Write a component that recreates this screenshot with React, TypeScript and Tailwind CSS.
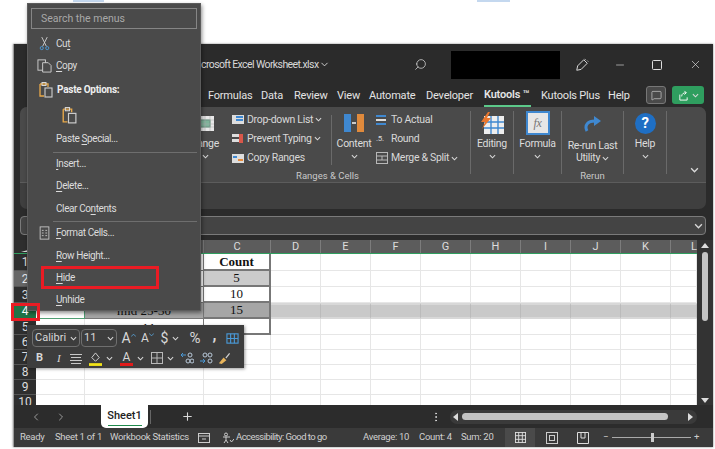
import React from "react";
import { Search, Minus, X, ChevronDown, ChevronLeft, ChevronRight, Plus, MoreVertical, MessageSquare } from "lucide-react";

const Chev = ({ c = "" }: { c?: string }) => (
  <svg viewBox="0 0 8 5" className={`w-[7px] h-[5px] shrink-0 ${c}`} fill="none" stroke="#d8d8d8" strokeWidth="1.2"><path d="M1 1l3 3 3-3" /></svg>
);

const U = ({ children }: { children: React.ReactNode }) => <span className="underline underline-offset-2">{children}</span>;

const MenuItem = ({ icon, children, h = "h-[22.5px]" }: { icon?: React.ReactNode; children: React.ReactNode; h?: string }) => (
  <div className={`flex items-center ${h} pl-[2px] text-[10px] tracking-[-0.4px] text-[#dcdcdc]`}>
    <div className="w-[23px] flex justify-center shrink-0">{icon}</div>
    <div>{children}</div>
  </div>
);

const Divider = () => <div className="h-[1px] bg-[#6e6e6e] ml-[22px]" />;

const PasteIcon = ({ s = 18 }: { s?: number }) => (
  <svg viewBox="0 0 18 18" width={s} height={s} fill="none">
    <path d="M4 3h8v3M4 3v12h4" stroke="#e8a94a" strokeWidth="1.3" />
    <rect x="6" y="1.5" width="4" height="3" stroke="#d8d8d8" strokeWidth="1" />
    <rect x="9" y="7" width="7" height="9" stroke="#cfcfcf" strokeWidth="1.1" />
  </svg>
);

const Menu = () => (
  <div className="absolute left-[27px] top-[3px] w-[174px] h-[308px] bg-[#4a4a4a] border border-[#5c5c5c] shadow-[1px_2px_4px_rgba(0,0,0,0.45)] px-[3px] pt-[4px]">
    <div className="h-[21px] border border-[#858585] flex items-center pl-[9px] text-[10.5px] text-[#a8a8a8]">Search the menus</div>
    <div className="h-[3px]" />
    <MenuItem h="h-[22px]" icon={
      <svg viewBox="0 0 12 16" width="11" height="15" fill="none">
        <path d="M3 1l5 10M9 1L4 11" stroke="#cfcfcf" strokeWidth="1" />
        <circle cx="3" cy="13" r="1.7" stroke="#4a9ad8" strokeWidth="1" /><circle cx="9" cy="13" r="1.7" stroke="#4a9ad8" strokeWidth="1" />
      </svg>}>Cu<U>t</U></MenuItem>
    <MenuItem h="h-[23px]" icon={
      <svg viewBox="0 0 16 16" width="15" height="15" fill="none" stroke="#cfcfcf" strokeWidth="1">
        <rect x="1" y="2" width="8" height="11" /><path d="M6 5h6l3 3v7H6z" fill="#4a4a4a" />
      </svg>}><U>C</U>opy</MenuItem>
    <MenuItem h="h-[25px]" icon={<PasteIcon />}><span className="font-bold text-[#eee] ml-[1px] tracking-[-0.25px]">Paste Options:</span></MenuItem>
    <div className="h-[26px] flex items-center pl-[28px]"><PasteIcon s={19} /></div>
    <MenuItem h="h-[20px]">Paste <U>S</U>pecial...</MenuItem>
    <div className="h-[3.5px]" />
    <Divider />
    <MenuItem h="h-[22px]"><U>I</U>nsert...</MenuItem>
    <MenuItem><U>D</U>elete...</MenuItem>
    <MenuItem>Clear Co<U>n</U>tents</MenuItem>
    <div className="h-[1px]" />
    <Divider />
    <MenuItem icon={
      <svg viewBox="0 0 12 16" width="11" height="14" fill="none" stroke="#c8c8c8" strokeWidth="1">
        <rect x="1" y="1" width="10" height="14" /><path d="M3 5h2M7 5h2M3 8h2M7 8h2M3 11h2M7 11h2" />
      </svg>}><U>F</U>ormat Cells...</MenuItem>
    <MenuItem><U>R</U>ow Height...</MenuItem>
    <MenuItem><U>H</U>ide</MenuItem>
    <MenuItem h="h-[21px]"><U>U</U>nhide</MenuItem>
  </div>
);

const Caret = ({ up }: { up?: boolean }) => (
  <svg viewBox="0 0 6 4" width="5" height="4" className="mb-[6px]" fill="none" stroke="#5aa8e0" strokeWidth="1"><path d={up ? "M0 4l3-3 3 3" : "M0 0l3 3 3-3"} /></svg>
);

const Mini = () => (
  <div className="absolute left-[27px] top-[325px] w-[217px] h-[43px] bg-[#3d3d3d] shadow-[1px_1px_3px_rgba(0,0,0,0.4)] pl-[5px] text-[#d8d8d8]">
    <div className="flex items-center h-[23px] pt-[3px]">
      <div className="w-[48px] h-[18px] border border-[#6f6f6f] rounded-[4px] flex items-center justify-between px-[2px] text-[11px]">Calibri<Chev /></div>
      <div className="w-[36px] h-[18px] border border-[#6f6f6f] rounded-[4px] ml-[1px] flex items-center justify-between px-[2px] text-[11px]">11<Chev /></div>
      <span className="ml-[2px] w-[19px] flex items-center justify-center text-[14px]">A<Caret up /></span>
      <span className="w-[19px] flex items-center justify-center text-[12px]">A<Caret /></span>
      <span className="text-[14px] w-[15px] text-center">$</span><Chev c="mr-[6px]" />
      <span className="text-[15px] w-[20px] text-center">%</span>
      <span className="text-[16px] font-bold w-[19px] text-center leading-none -translate-y-[3px]">,</span>
      <svg viewBox="0 0 14 14" width="13" height="13" className="ml-[2px]" fill="none" stroke="#4a9ad8" strokeWidth="1.2"><rect x="1" y="2" width="12" height="10" /><path d="M1 7h12M5 2v10M9 2v10" /></svg>
    </div>
    <div className="flex items-center h-[20px]">
      <span className="w-[9px] ml-[4px] text-[11px] font-bold">B</span>
      <span className="w-[9px] ml-[12px] text-[11px] italic font-['Liberation_Serif',serif]">I</span>
      <svg viewBox="0 0 12 10" width="12" height="11" className="ml-[4px]" fill="none" stroke="#c8c8c8"><path d="M0 1h12M1 4h10M0 7h12M1 10h10" /></svg>
      <svg viewBox="0 0 14 16" width="13" height="15" className="ml-[7px]" fill="none"><path d="M3 7l4-5 4 5-4 4z" stroke="#d8d8d8" /><rect x="0" y="13" width="14" height="3" fill="#f2e318" /></svg>
      <Chev c="ml-[4px]" />
      <span className="ml-[7px] w-[13px] h-[15px] relative text-[12px] leading-[12px] text-center">A<span className="absolute left-0 right-0 bottom-0 h-[3px] bg-[#e11a1a]" /></span>
      <Chev c="ml-[4px]" />
      <svg viewBox="0 0 12 12" width="12" height="12" className="ml-[7px]" fill="none" stroke="#b8b8b8"><rect x=".5" y=".5" width="11" height="11" /><path d="M6 0v12M0 6h12" /></svg>
      <Chev c="ml-[4px]" />
      <svg viewBox="0 0 14 12" width="14" height="12" className="ml-[6px]" fill="none" stroke="#b8c8d8"><path d="M1 3h5M1 3l2-2M1 3l2 2" stroke="#4a9ad8" /><circle cx="8" cy="9" r="2" /><circle cx="12" cy="9" r="2" /><circle cx="10" cy="3" r="2" /></svg>
      <svg viewBox="0 0 14 12" width="14" height="12" className="ml-[5px]" fill="none" stroke="#b8c8d8"><path d="M1 9h5M6 9L4 7M6 9l-2 2" stroke="#4a9ad8" /><circle cx="6" cy="3" r="2" /><circle cx="11" cy="3" r="2" /><circle cx="11" cy="9" r="2" /></svg>
      <svg viewBox="0 0 14 14" width="13" height="13" className="ml-[5px]"><path d="M1 12l5-6 3 3-5 4z" fill="#e8b45a" /><path d="M8 6l4-5 1 1-4 5z" fill="#cfcfcf" /></svg>
    </div>
  </div>
);

const Large = ({ icon, label, w, line2 }: { icon: React.ReactNode; label: string; w: string; line2?: string }) => (
  <div className={`${w} flex flex-col items-center text-[10.5px] tracking-[-0.3px] text-[#dcdcdc] leading-[12px] pt-[2px] shrink-0`}>
    <div className="h-[28px] flex items-center">{icon}</div>
    {line2 ? (
      <>
        <div className="mt-[3px]">{label}</div>
        <div className="flex items-center gap-[2px]">{line2}<Chev /></div>
      </>
    ) : (
      <>
        <div className="h-[14px] flex items-center">{label}</div>
        <div className="h-[8px] mt-[1px] flex items-center"><Chev /></div>
      </>
    )}
  </div>
);

const Small = ({ icon, label, chev }: { icon: React.ReactNode; label: string; chev?: boolean }) => (
  <div className="h-[20px] flex items-center text-[10.5px] tracking-[-0.3px] text-[#d8d8d8] whitespace-nowrap">
    <div className="w-[15px] flex items-center shrink-0">{icon}</div>
    <span>{label}</span>
    {chev && <Chev c="ml-[2px]" />}
  </div>
);

const Sep = () => <div className="w-[1px] h-[63px] mt-[4px] bg-[#6a6a6a] shrink-0" />;

const Ribbon = () => (
  <div className="ml-[6px] w-[686px] h-[102px] bg-[#3f3f3f] rounded-[7px] overflow-hidden shrink-0">
    <div className="h-[76px] bg-[#4a4a4a] border-b border-[#5c5c5c] flex">
      <div className="w-[165px] shrink-0" />
      <div className="w-[285px] shrink-0 flex flex-col">
        <div className="h-[61px] flex">
          <Large w="w-[40px]" label="Range" icon={
            <svg viewBox="0 0 18 15" width="18" height="15"><rect width="18" height="15" fill="#e8e8e8" /><rect x="4" y="4" width="10" height="7" fill="#7fb39a" stroke="#4f8a70" /><path d="M0 4h18M0 8h18M0 11h18M4 0v15M9 0v15M14 0v15" stroke="#aaa" strokeWidth=".5" /></svg>} />
          <div className="w-[99px] ml-[7px] pt-[3px] flex flex-col shrink-0">
            <Small chev label="Drop-down List" icon={<svg viewBox="0 0 12 9" width="12" height="9"><rect width="12" height="9" fill="#ddd" /><rect x="4" y="1" width="7" height="2" fill="#3f88d0" /><rect x="4" y="4" width="7" height="2" fill="#3f88d0" /></svg>} />
            <Small chev label="Prevent Typing" icon={<svg viewBox="0 0 12 9" width="12" height="9"><rect width="7" height="3" fill="#ddd" /><rect y="5" width="7" height="3" fill="#ddd" /><rect x="7" width="4" height="9" fill="#d8574a" /></svg>} />
            <Small label="Copy Ranges" icon={<svg viewBox="0 0 12 9" width="12" height="9"><rect width="12" height="9" fill="#ddd" /><rect x="1" y="2" width="4" height="2" fill="#3f88d0" /><rect x="6" y="5" width="5" height="2" fill="#e88b3a" /></svg>} />
          </div>
          <div className="w-[1px] h-[50px] mt-[8px] bg-[#6a6a6a] shrink-0" />
          <Large w="w-[44px]" label="Content" icon={
            <svg viewBox="0 0 20 18" width="20" height="18"><rect width="7" height="18" fill="#3f88d0" /><rect x="13" width="7" height="18" fill="#e08a3c" /><rect x="8" y="8" width="4" height="2" fill="#ccc" /></svg>} />
          <div className="pt-[3px] flex flex-col">
            <Small label="To Actual" icon={<svg viewBox="0 0 10 10" width="10" height="10"><rect width="10" height="2" fill="#3f88d0" /><rect y="4" width="10" height="2" fill="#ddd" /><rect y="8" width="10" height="2" fill="#3f88d0" /></svg>} />
            <Small label="Round" icon={<span className="text-[8px] leading-none">.5.</span>} />
            <Small chev label="Merge & Split" icon={<svg viewBox="0 0 12 12" width="12" height="12" fill="none" stroke="#b8b8b8"><rect x=".5" y=".5" width="11" height="11" /><path d="M0 4h12M0 8h12M6 4v4" /></svg>} />
          </div>
        </div>
        <div className="text-center text-[9.5px] text-[#c8c8c8] leading-[12px] mt-[2px]">Ranges &amp; Cells</div>
      </div>
      <Sep />
      <Large w="w-[42px]" label="Editing" icon={
        <svg viewBox="0 0 24 22" width="24" height="22"><rect x="4" y="4" width="20" height="18" fill="#eee" /><path d="M4 10h20M4 16h20M11 4v18M18 4v18" stroke="#3f88d0" strokeWidth="1.4" /><path d="M8 0l-7 10h4l-3 7 9-11H7l3-6z" fill="#e8772e" /></svg>} />
      <Sep />
      <Large w="w-[47px]" label="Formula" icon={
        <div className="w-[24px] h-[24px] border-2 border-[#3f88d0] bg-[#e6e6e6] flex items-center justify-center text-[12px] italic font-['Liberation_Serif',serif] text-[#777]">fx</div>} />
      <Sep />
      <div className="w-[61px] shrink-0 flex flex-col">
        <div className="h-[61px]"><Large w="w-[61px]" label="Re-run Last" line2="Utility" icon={
          <svg viewBox="0 0 18 18" width="18" height="18" fill="none" className="mt-[2px]"><path d="M3 16C0 10 4 6 11 6" stroke="#3f88d0" strokeWidth="3" /><path d="M10 1l7 5-7 5z" fill="#3f88d0" /></svg>} /></div>
        <div className="text-center text-[9.5px] text-[#c8c8c8] leading-[12px] mt-[2px]">Rerun</div>
      </div>
      <Sep />
      <Large w="w-[42px]" label="Help" icon={
        <div className="w-[21px] h-[21px] rounded-full bg-[#1f6fc4] flex items-center justify-center text-white text-[15px] font-bold">?</div>} />
      <Sep />
      <div className="flex-1 flex items-end justify-end pr-[7px] pb-[9px]"><Chev c="w-[9px] h-[6px]" /></div>
    </div>
  </div>
);

const cols = "grid grid-cols-[22px_49px_119px_67px_50px_50px_50px_50px_50px_50px_50px_50px_26px]";
const colNames = ["", "", "", "C", "D", "E", "F", "G", "H", "I", "J", "K", "L"];
const heights = ["h-[17px]", "h-[16px]", "h-[16px]", "h-[16px]", "h-[16px]", "h-[15px]", "h-[15px]", "h-[15px]", "h-[15px]", "h-[15px]"];

const Grid = () => (
  <div className="flex-1 min-w-0">
    <div className={`${cols} h-[14px] bg-[#5c5c5c] border-b-[1.5px] border-[#2f9e5f] text-[11px] leading-[13px] text-[#ddd]`}>
      {colNames.map((n, i) => (
        <div key={i} className={`border-r border-[#7c7c7c] ${i === 12 ? "text-right border-r-0" : "text-center"} ${i === 0 ? "bg-[#2e2e2e] flex justify-end items-end pb-[1px]" : ""}`}>
          {i === 0 ? <div className="w-0 h-0 border-l-[14px] border-l-transparent border-b-[4px] border-b-[#ddd]" /> : n}
        </div>
      ))}
    </div>
    <div className="h-[151px] overflow-hidden bg-white font-['Liberation_Serif',serif] text-[13px] leading-[14px] text-[#111]">
      {heights.map((h, r) => (
        <div key={r} className={`${cols} ${h}`}>
          <div className={`flex items-center justify-center text-[12px] font-['Roboto',sans-serif] border-b border-[#555] ${r === 3 ? "bg-[#217346] text-white" : r === 1 ? "bg-[#666] text-[#eee]" : "bg-[#2e2e2e] text-[#ddd]"}`}>{r + 1}</div>
          <div className={`border-r border-b ${r === 3 ? "bg-white border-[#4f9e73]" : "border-[#e6e6e6]"}`} />
          <div className={`border-r border-b flex justify-center ${r === 4 ? "items-end" : "items-center"} ${r === 3 ? "bg-[#a6a6a6] border-[#777]" : r < 5 ? "border-[#777]" : "border-[#e6e6e6]"}`}>
            {r === 3 ? "mid 25-30" : r === 4 ? <span className="translate-y-[2px]">Old</span> : ""}
          </div>
          <div className={`flex items-center justify-center ${r < 5 ? "border-r-2 border-b-2 border-[#777]" : "border-[#e6e6e6] border-r border-b"} ${r === 1 ? "bg-[#cbcbcb]" : r === 3 ? "bg-[#a6a6a6]" : ""} ${r === 0 ? "font-bold" : ""}`}>
            {r === 0 ? "Count" : r === 1 ? "5" : r === 2 ? "10" : r === 3 ? "15" : ""}
          </div>
          {Array.from({ length: 9 }).map((_, c) => (
            <div key={c} className={`border-r ${r === 3 ? "bg-[#c9c9c9] border-[#bbb] border-t-2 border-b-2 border-t-[#d8d8d8] border-b-[#d8d8d8]" : "border-b border-[#e6e6e6]"}`} />
          ))}
        </div>
      ))}
    </div>
  </div>
);

const VScroll = () => (
  <div className="w-[16px] flex flex-col items-center bg-[#333] pt-[3px] pb-[2px] shrink-0 h-[165px]">
    <div className="w-0 h-0 border-x-[4px] border-x-transparent border-b-[5px] border-b-[#ddd]" />
    <div className="w-[6px] h-[69px] rounded-full bg-[#c4c4c4] mt-[4px]" />
    <div className="flex-1" />
    <div className="w-0 h-0 border-x-[4px] border-x-transparent border-t-[5px] border-t-[#ddd]" />
  </div>
);

const tabs: [string, string][] = [
  ["Formulas", "w-[53px]"], ["Data", "w-[33px]"], ["Review", "w-[43px]"], ["View", "w-[32px]"], ["Automate", "w-[57px]"], ["Developer", "w-[58px]"],
];

export default function App() {
  return (
    <div className="relative w-[715px] h-[449px] bg-white overflow-hidden font-['Roboto',sans-serif]">
      <div className="h-[2px] flex">
        <div className="ml-[73px] w-[31px] bg-[#c4d8ef]" />
        <div className="ml-[373px] w-[33px] bg-[#c4d8ef]" />
      </div>
      <div className="mt-[42px] ml-[13px] w-[700px] h-[403px] bg-[#2b2b2b] border-l border-[#9a9a9a] flex flex-col shadow-[0_0_2px_rgba(0,0,0,0.5)]">
        <div className="h-[41px] flex items-center text-[#d8d8d8] text-[10.5px] tracking-[-0.6px] shrink-0">
          <span className="ml-[187px] w-[115px] whitespace-nowrap">crosoft Excel Worksheet.xlsx</span>
          <ChevronDown size={11} className="ml-[3px]" />
          <Search size={13} className="ml-[84px] -scale-x-100" strokeWidth={1.4} />
          <div className="ml-[24px] w-[109px] h-[28px] bg-black" />
          <svg viewBox="0 0 16 16" width="14" height="14" className="ml-[15px]" fill="none" stroke="#ddd" strokeWidth="1.1"><path d="M2 14l1-5 7-7 4 4-7 7zM11 1l1 1M14 3l1 1" /></svg>
          <Minus size={12} className="ml-[25px]" strokeWidth={1.3} />
          <svg viewBox="0 0 10 10" width="10" height="10" className="ml-[26px]" fill="none" stroke="#ddd"><rect x=".5" y=".5" width="9" height="9" rx="1" /></svg>
          <X size={13} className="ml-[27px]" strokeWidth={1.3} />
        </div>
        <div className="h-[22px] flex items-center text-[11px] tracking-[-0.2px] text-[#e4e4e4] shrink-0 whitespace-nowrap pl-[194px]">
          {tabs.map(([t, m]) => <span key={t} className={m}>{t}</span>)}
          <span className="w-[47px] h-full flex items-center font-semibold border-b-2 border-[#5cc98a]">Kutools ™</span>
          <span className="ml-[10px] w-[67px]">Kutools Plus</span>
          <span>Help</span>
          <div className="absolute left-[646px] top-[86px] w-[20px] h-[18px] rounded-[3px] bg-[#4a4a4a] border border-[#777] flex items-center justify-center"><MessageSquare size={11} strokeWidth={1.3} /></div>
          <div className="absolute left-[672px] top-[86px] w-[32px] h-[18px] rounded-[3px] bg-[#2f9e5f] flex items-center justify-center gap-[3px]">
            <svg viewBox="0 0 12 12" width="11" height="11" fill="none" stroke="#fff"><path d="M2 5v6h8V8M4 7c0-3 2-4 5-4M7 1l2 2-2 2" /></svg>
            <Chev />
          </div>
        </div>
        <Ribbon />
        <div className="ml-[6px] mt-[7px] w-[686px] h-[19px] bg-[#444] border border-[#7a7a7a] rounded-[4px] flex items-center justify-end pr-[2px] shrink-0">
          <Chev c="w-[9px] h-[6px]" />
        </div>
        <div className="h-[5px] shrink-0" />
        <div className="flex shrink-0">
          <Grid />
          <VScroll />
        </div>
        <div className="h-[23px] bg-[#2c2c2c] flex items-center shrink-0 text-[#d8d8d8]">
          <ChevronLeft size={12} className="ml-[16px] text-[#999]" />
          <ChevronRight size={12} className="ml-[13px] text-[#999]" />
          <div className="ml-[34px] w-[47px] h-[23px] bg-white rounded-b-[5px] text-[#222] text-[11px] font-medium flex items-center justify-center relative">
            Sheet1
            <div className="absolute left-[7px] right-[6px] bottom-[2px] h-[1.5px] bg-[#1f8a4c]" />
          </div>
          <div className="ml-[2px] w-[1px] h-[14px] bg-[#666]" />
          <Plus size={13} className="ml-[30px]" />
          <MoreVertical size={12} className="ml-[236px]" />
          <div className="ml-[8px] w-[247px] h-[14px] rounded-full bg-[#3a3a3a] flex items-center px-[3px]">
            <div className="w-0 h-0 border-y-[4px] border-y-transparent border-r-[5px] border-r-[#ddd]" />
            <div className="ml-[4px] w-[206px] h-[7px] rounded-full bg-[#c4c4c4]" />
            <div className="flex-1" />
            <div className="w-0 h-0 border-y-[4px] border-y-transparent border-l-[5px] border-l-[#ddd] mr-[1px]" />
          </div>
        </div>
        <div className="flex-1 bg-[#3a3a3a] flex items-center text-[9.5px] tracking-[-0.3px] text-[#d0d0d0] whitespace-nowrap">
          <span className="ml-[6px] w-[35px]">Ready</span>
          <span className="w-[55px]">Sheet 1 of 1</span>
          <span className="w-[88px]">Workbook Statistics</span>
          <svg viewBox="0 0 12 12" width="12" height="12" fill="none" stroke="#ccc"><rect x=".5" y="1.5" width="11" height="9" /><path d="M1 4h10M4 7h4" /></svg>
          <svg viewBox="0 0 12 12" width="12" height="12" className="ml-[12px]" fill="none" stroke="#ccc"><circle cx="4" cy="2.5" r="1.5" /><path d="M1 5h7M4 5v3l-2 3M4 8l2 3M8 8l1.5 2L12 7" /></svg>
          <span className="ml-[2px] w-[127px] tracking-[-0.55px]">Accessibility: Good to go</span>
          <span className="w-[56px]">Average: 10</span>
          <span className="w-[42px]">Count: 4</span>
          <span className="w-[44px]">Sum: 20</span>
          <div className="w-[30px] h-[19px] bg-[#4a4a4a] flex items-center justify-center">
            <svg viewBox="0 0 12 12" width="11" height="11" fill="none" stroke="#ddd"><rect x=".5" y=".5" width="11" height="11" /><path d="M4 0v12M8 0v12M0 4h12M0 8h12" /></svg>
          </div>
          <svg viewBox="0 0 12 12" width="12" height="12" className="ml-[11px]" fill="none" stroke="#ccc"><rect x=".5" y=".5" width="11" height="11" /><rect x="3.5" y="3.5" width="5" height="5" /></svg>
          <svg viewBox="0 0 12 12" width="12" height="12" className="ml-[19px]" fill="none" stroke="#ddd"><path d="M.5 11.5V.5h11v11zM4 0v6h4V0" /></svg>
          <span className="ml-[14px] text-[#ccc] w-[7px]">−</span>
          <div className="ml-[2px] w-[79px] h-[1px] bg-[#aaa] relative">
            <div className="absolute left-[39px] -top-[4px] w-[3px] h-[9px] bg-[#ccc]" />
          </div>
          <span className="ml-[3px] text-[#ccc]">+</span>
        </div>
      </div>
      <Menu />
      <Mini />
      <div className="absolute left-[41px] top-[266px] w-[118px] h-[23px] border-[3px] border-[#ea1c24]" />
      <div className="absolute left-[11px] top-[303px] w-[29px] h-[18px] border-[3px] border-[#ea1c24]" />
    </div>
  );
}
